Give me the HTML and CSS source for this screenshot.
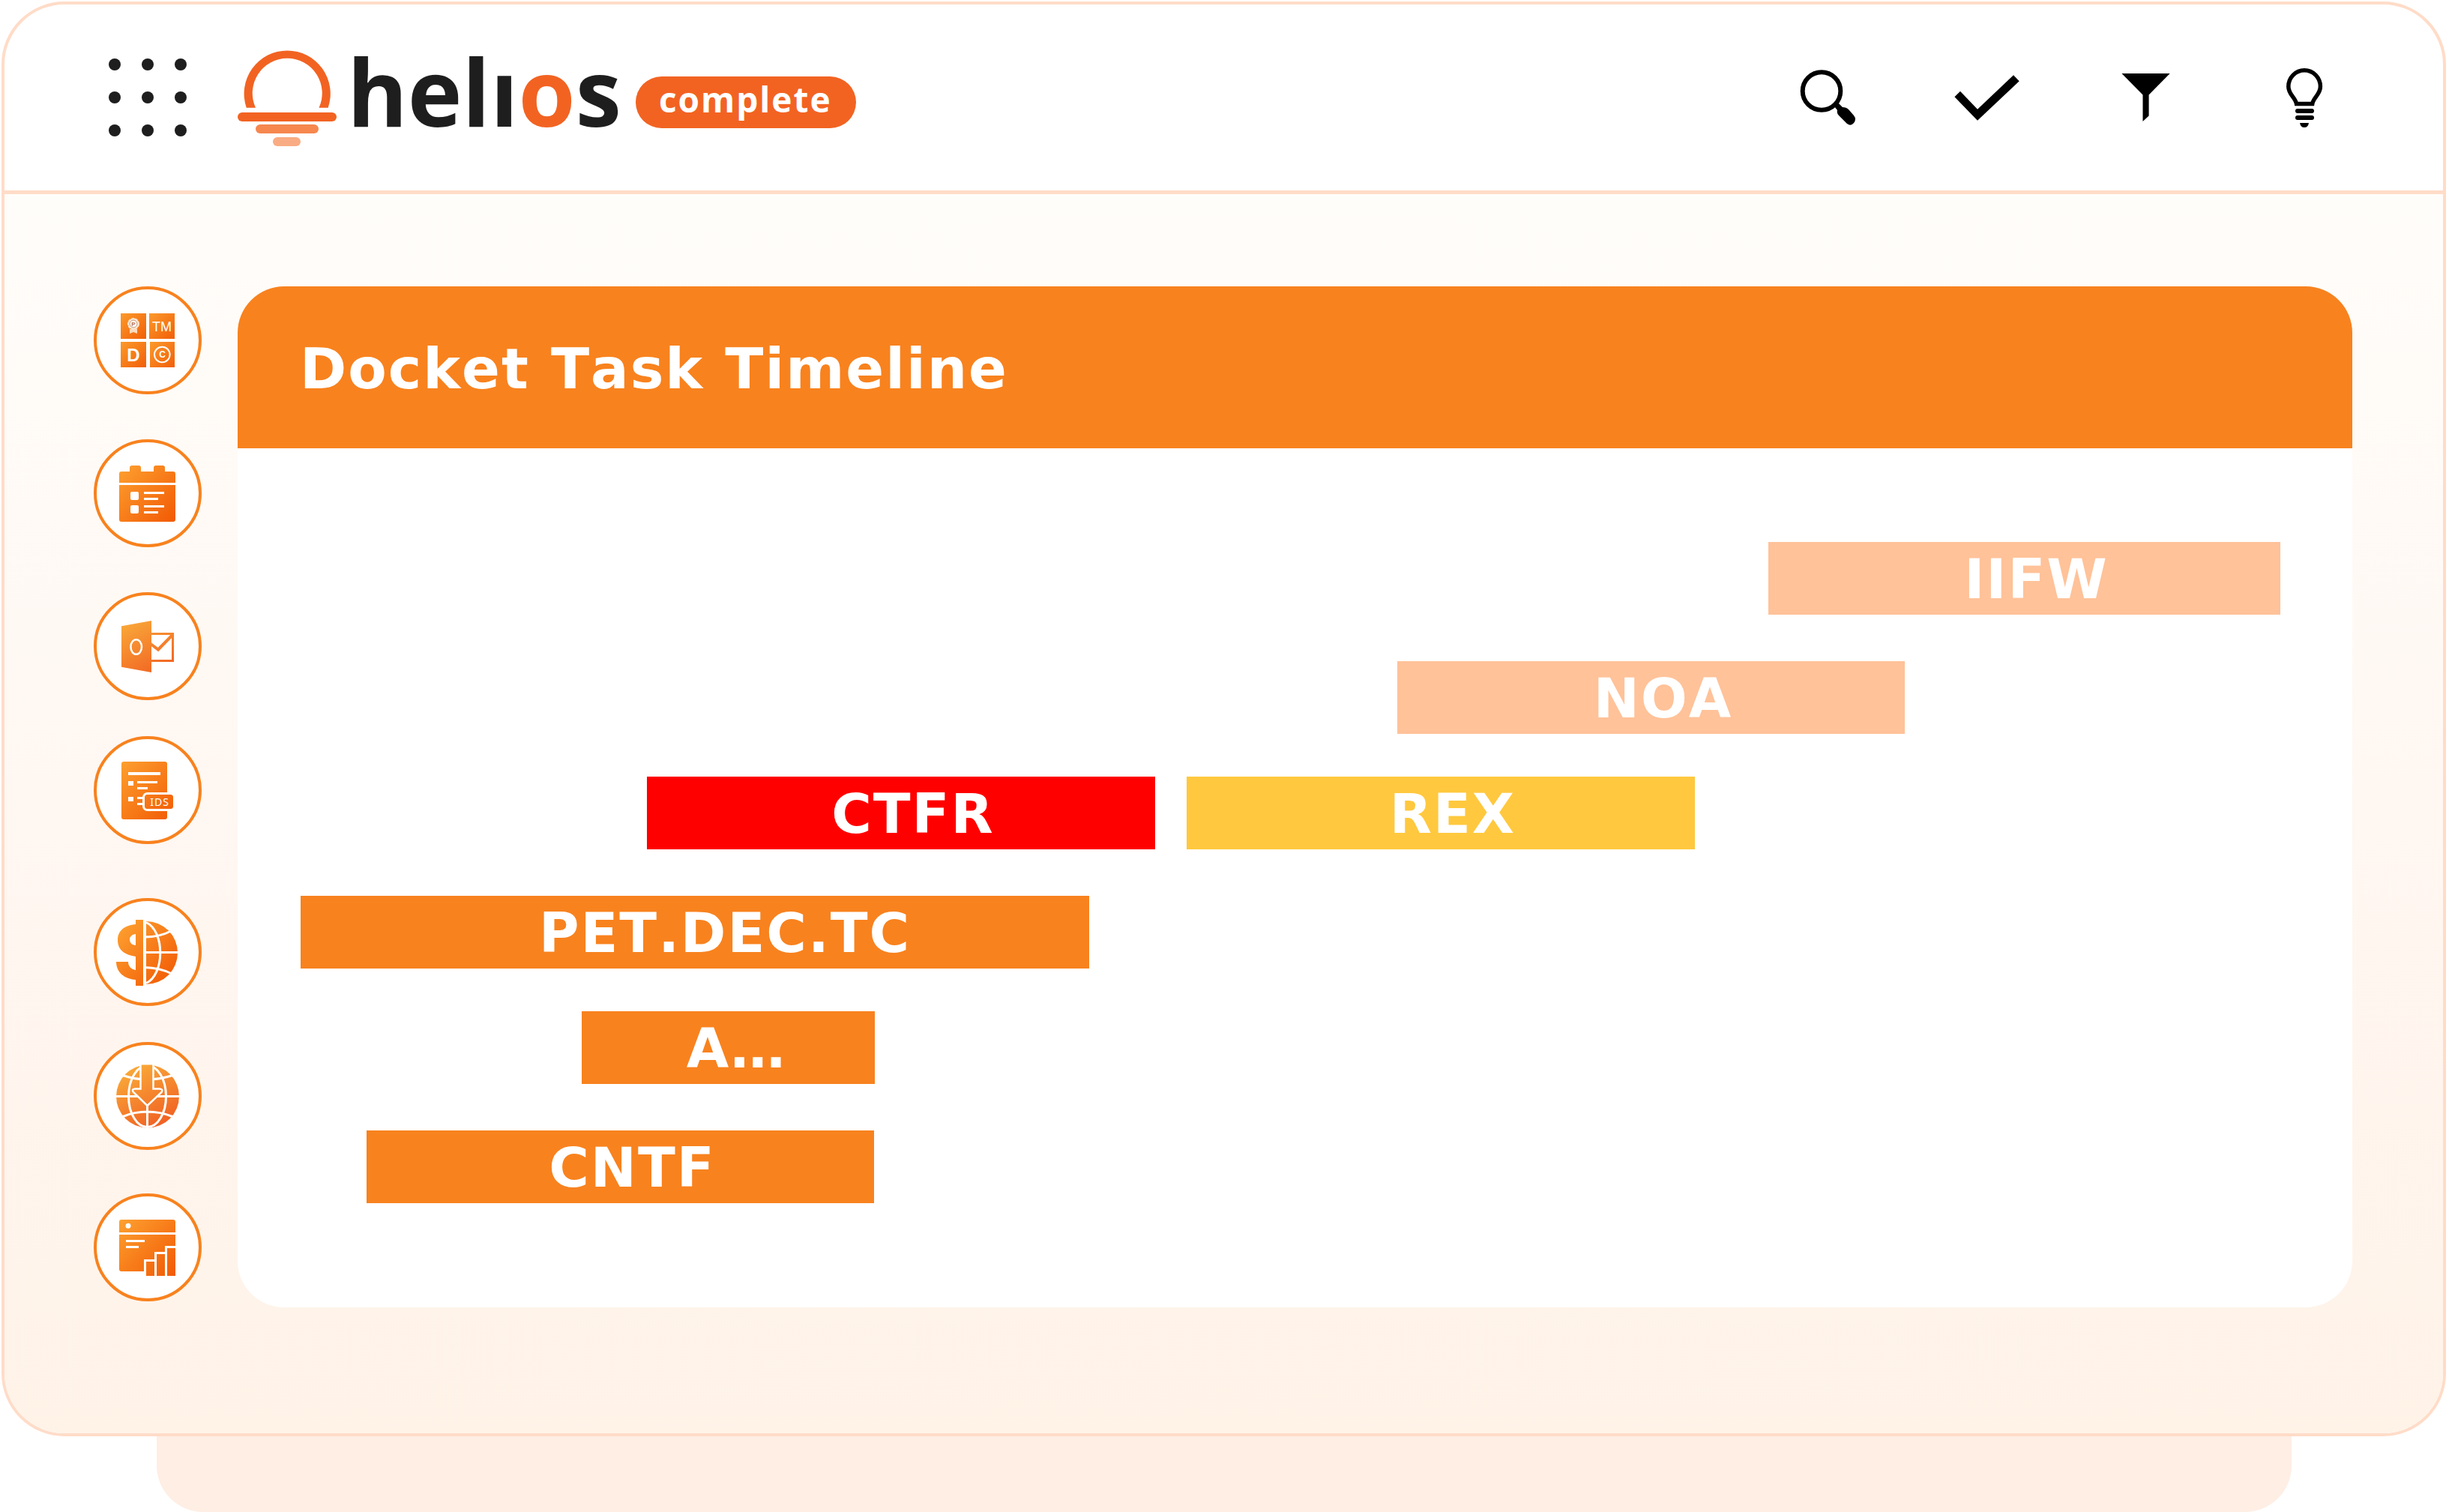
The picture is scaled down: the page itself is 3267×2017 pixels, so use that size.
FILE: index.html
```html
<!DOCTYPE html>
<html lang="en">
<head>
<meta charset="utf-8">
<title>helios complete – Docket Task Timeline</title>
<link rel="stylesheet" href="styles.css">
</head>
<body>
<div class="frame">
  <header class="topbar">
    <button class="icon-button menu" type="button" aria-label="Apps">
      <svg viewBox="0 0 106 106" width="106" height="106" fill="#1e1e1e">
        <circle cx="9" cy="9" r="8"/><circle cx="53" cy="9" r="8"/><circle cx="97" cy="9" r="8"/>
        <circle cx="9" cy="53" r="8"/><circle cx="53" cy="53" r="8"/><circle cx="97" cy="53" r="8"/>
        <circle cx="9" cy="97" r="8"/><circle cx="53" cy="97" r="8"/><circle cx="97" cy="97" r="8"/>
      </svg>
    </button>
    <a class="brand" href="#">
      <svg class="sun" viewBox="0 0 132 130" width="132" height="130">
        <path d="M11.700 78.700A57.600 57.600 0 1 1 120.700 78.700H108.500A46.500 46.500 0 1 0 24 78.700Z" fill="#f26322"/>
        <rect x="0" y="85" width="132" height="12" rx="6" fill="#f26322"/>
        <rect x="24" y="101" width="84" height="12" rx="6" fill="#f6874f"/>
        <rect x="47" y="118" width="37" height="12" rx="6" fill="#f9ac83"/>
      </svg>
      <span class="wordmark">helı<span class="accent">o</span>s</span>
      <span class="edition">complete</span>
    </a>
    <nav class="tools">
      <button class="icon-button" type="button" aria-label="Search">
        <svg viewBox="0 0 96 96" width="96" height="96">
          <circle cx="40" cy="39.500" r="25.300" fill="none" stroke="#000" stroke-width="6"/>
          <path d="M57 60l4-6 7 7q5 0 8 3l7 8q4 5 0 10t-9 1l-11-11q-3-3-2-7z"/>
        </svg>
      </button>
      <button class="icon-button" type="button" aria-label="Complete">
        <svg viewBox="0 0 96 96" width="96" height="96"><path d="M13 39.700L36 63.700L84 18.300L91.700 26.300L36 78.700L5.400 47.300Z"/></svg>
      </button>
      <button class="icon-button" type="button" aria-label="Filter">
        <svg viewBox="0 0 96 96" width="96" height="96"><path d="M16.400 16H80.700L52.600 44.500V72.500L44.500 80V44.500Z"/></svg>
      </button>
      <button class="icon-button" type="button" aria-label="Ideas">
        <svg viewBox="0 0 96 96" width="96" height="96">
          <path d="M37.500 56.500C36 48 26.800 44 26.800 33.500a21.300 21.700 0 0 1 42.600 0C69.400 44 60 48 58.700 56.500Z" fill="none" stroke="#000" stroke-width="5.500"/>
          <rect x="36" y="63" width="25" height="6" rx="3"/><rect x="36" y="72" width="25" height="6" rx="3"/>
          <path d="M42 82H54Q53 88 48 88T42 82Z"/>
        </svg>
      </button>
    </nav>
  </header>

  <div class="workspace">
    <nav class="rail">
      <button class="rail-button" type="button" aria-label="Intellectual property">
        <svg viewBox="0 0 136 136" width="136" height="136">
          <defs>
            <linearGradient id="tile" x1="0" y1="0" x2="1" y2="1"><stop offset="0" stop-color="#fb9a2c"/><stop offset="1" stop-color="#f25f07"/></linearGradient>
            <linearGradient id="warm" gradientUnits="userSpaceOnUse" x1="30" y1="32" x2="106" y2="104"><stop offset="0" stop-color="#fda030"/><stop offset="1" stop-color="#f25a04"/></linearGradient>
            <linearGradient id="amber" gradientUnits="userSpaceOnUse" x1="42" y1="30" x2="84" y2="108"><stop offset="0" stop-color="#f9ab3a"/><stop offset="1" stop-color="#f16122"/></linearGradient>
          </defs>
          <g fill="url(#tile)"><rect x="32" y="32" width="34" height="34"/><rect x="70" y="32" width="34" height="34"/><rect x="32" y="70" width="34" height="34"/><rect x="71" y="70" width="33" height="34"/></g>
          <path d="M44 53h10v6l-5-2-5 2z" fill="#fbdcc0"/>
          <circle cx="49" cy="46" r="7" fill="#fff" stroke="#fbe3cf" stroke-width="2" stroke-dasharray="4 1"/>
          <circle cx="49" cy="46" r="5" fill="#fff" stroke="#c98a58" stroke-width="1"/>
          <text x="49" y="49" class="glyph seal" font-size="8">P</text>
          <text x="87" y="56" class="glyph" font-size="18">TM</text>
          <text x="49" y="96" class="glyph" font-size="24" font-weight="700">D</text>
          <circle cx="87.300" cy="87" r="10.300" fill="none" stroke="#fff" stroke-width="2"/>
          <text x="87.500" y="91.300" class="glyph" font-size="12" font-weight="700">C</text>
        </svg>
      </button>
      <button class="rail-button" type="button" aria-label="Docket calendar">
        <svg viewBox="0 0 136 136" width="136" height="136">
          <path fill="url(#warm)" d="M30 54V42q0-3 3-3H44V34q0-3 3-3h9q3 0 3 3v5H76V34q0-3 3-3h9q3 0 3 3v5h11q3 0 3 3V54ZM30 57H105v46q0 3-3 3H33q-3 0-3-3Z"/>
          <g fill="#fff"><rect x="45" y="66" width="11" height="11" rx="2"/><rect x="45" y="84" width="11" height="11" rx="2"/><path d="M63 66h27v3H63zM63 74h19v3H63zM63 84h27v3H63zM63 92h19v3H63z"/></g>
        </svg>
      </button>
      <button class="rail-button" type="button" aria-label="Outlook mail">
        <svg viewBox="0 0 136 136" width="136" height="136">
          <path fill="url(#amber)" d="M33 41.300L73 34V103L33 95.700Z"/>
          <path fill="none" stroke="url(#amber)" stroke-width="3" d="M73 51.500H101.500V87.500H73"/>
          <path fill="none" stroke="url(#amber)" stroke-width="4" d="M72 65L82 72.500L101 53"/>
          <ellipse cx="52.700" cy="69" rx="7.300" ry="9.800" fill="none" stroke="#fff" stroke-width="2.500"/>
        </svg>
      </button>
      <button class="rail-button" type="button" aria-label="IDS forms">
        <svg viewBox="0 0 136 136" width="136" height="136">
          <rect x="33" y="30" width="61" height="77" rx="3" fill="url(#warm)"/>
          <path fill="#fff" d="M42 44h43v4H42zM42 56h7v6h-7zM42 77h7v6h-7zM54 56h27v3H54zM54 64h14v3H54zM54 77h9v3h-9zM54 85h9v3h-9z"/>
          <rect x="62.500" y="72.500" width="41" height="22" rx="5" fill="url(#warm)" stroke="#fff" stroke-width="3"/>
          <text x="84" y="89" class="glyph ids" font-size="14">IDS</text>
        </svg>
      </button>
      <button class="rail-button" type="button" aria-label="International costs">
        <svg viewBox="0 0 136 136" width="136" height="136">
          <path fill="url(#warm)" d="M52 25H62V113H52V105C37 104 26 95 26 81H42C42 87 46 91 52 92V74C37 72 28 65 28 52C28 39 38 32 52 31ZM52 44Q44 45 44 51.500T52 59Z" fill-rule="evenodd"/>
          <path fill="url(#warm)" d="M66 27A42 42 0 0 1 66 111Z"/>
          <path fill="none" stroke="#fff" stroke-width="3" d="M66 68.500H110M66 28.500C91 40 91 98 66 109.500M64 48Q84 48 99 40M64 88.500Q84 89 99 96.500"/>
        </svg>
      </button>
      <button class="rail-button" type="button" aria-label="Global downloads">
        <svg viewBox="0 0 136 136" width="136" height="136">
          <circle cx="68" cy="68.500" r="42" fill="url(#amber)"/>
          <g fill="none" stroke="#fff" stroke-width="3">
            <path d="M25 68.500H111M67.500 80V111M35 40.500Q50 46 67.500 46T101 40.500M35 95.500Q50 89 67.500 89T101 95.500"/>
            <ellipse cx="67.500" cy="68.500" rx="25" ry="41"/>
          </g>
          <path d="M58.500 26.500V58.500H51Q46 59 49 63L67.500 81L86.500 63Q89 59 84 58.500H75.500V26.500Z" fill="url(#amber)"/>
          <path d="M58.500 24V58.500H51Q46 59 49 63L67.500 81L86.500 63Q89 59 84 58.500H75.500V24" fill="none" stroke="#fff" stroke-width="2.500"/>
        </svg>
      </button>
      <button class="rail-button" type="button" aria-label="Reports">
        <svg viewBox="0 0 136 136" width="136" height="136">
          <path fill="url(#warm)" d="M30 48V34q0-3 3-3h69q3 0 3 3V48ZM30 51H105V66H91V74H77V84H63V100H33q-3 0-3-3ZM66 87H77V106H66ZM80 77H91V106H80ZM94 69H105V106H94Z"/>
          <circle cx="42" cy="39.300" r="3.500" fill="#fff"/><path fill="#fff" d="M39 58h25v3H39zM39 66h17v3H39z"/>
        </svg>
      </button>
    </nav>

    <main class="panel">
      <h1 class="panel-title">Docket Task Timeline</h1>
      <div class="timeline">
        <div class="track"><div class="bar pale" style="margin-left:74.140%;width:25.860%">IIFW</div></div>
        <div class="track"><div class="bar pale" style="margin-left:55.396%;width:25.634%">NOA</div></div>
        <div class="track">
          <div class="bar red" style="margin-left:17.493%;width:25.672%">CTFR</div>
          <div class="bar yellow" style="margin-left:1.590%;width:25.672%">REX</div>
        </div>
        <div class="track"><div class="bar long" style="margin-left:0;width:39.833%">PET.DEC.TC</div></div>
        <div class="track"><div class="bar short" style="margin-left:14.199%;width:14.805%">A…</div></div>
        <div class="track"><div class="bar" style="margin-left:3.332%;width:25.634%">CNTF</div></div>
      </div>
    </main>
  </div>
</div>
<div class="underlay"></div>
</body>
</html>
```
FILE: styles.css
```css
* { box-sizing: border-box; }

body {
  margin: 0;
  padding: 2px 4px 0 2px;
  background: #fff;
  font-family: "DejaVu Sans", sans-serif;
}

button {
  padding: 0;
  border: 0;
  background: none;
  cursor: pointer;
}

svg { display: block; }

.frame {
  border: 4px solid #ffdcc8;
  border-radius: 84px;
  overflow: hidden;
  background: #fff;
}

.topbar {
  display: flex;
  align-items: center;
  height: 253px;
  padding: 0 137px 0 138px;
  border-bottom: 5px solid #ffdcc8;
}

.brand {
  display: flex;
  align-items: center;
  margin-left: 67px;
  font-family: "Open Sans", "Noto Sans", sans-serif;
  font-weight: 700;
  color: #1e1e1e;
  text-decoration: none;
}

.wordmark {
  margin: 0 0 16px 14px;
  font-size: 123px;
  line-height: 160px;
}

.accent { color: #f26322; }

.edition {
  margin: 12px 0 0 19px;
  padding: 0 32px 9px 31px;
  border-radius: 35px;
  background: #f26322;
  color: #fff;
  font-size: 46px;
  line-height: 60px;
  letter-spacing: 2px;
}

.tools {
  display: flex;
  gap: 116px;
  margin-left: auto;
}

.workspace {
  display: flex;
  align-items: flex-start;
  gap: 48px;
  padding: 123px 121px 168px 119px;
  background: linear-gradient(#fffdfa, #fff6f0 60%, #fff3e8);
}

.rail {
  display: flex;
  flex-direction: column;
  gap: 48px;
}

.rail-button {
  width: 144px;
  height: 144px;
  border: 4px solid #f8821e;
  border-radius: 50%;
  background: #fff;
}

.rail-button:nth-child(2),
.rail-button:nth-child(3) { margin-top: 12px; }
.rail-button:nth-child(5) { margin-top: 24px; }
.rail-button:nth-child(7) { margin-top: 10px; }

.glyph {
  fill: #fff;
  font-family: "Liberation Sans", sans-serif;
  text-anchor: middle;
}

.seal {
  fill: #b8733f;
  font-weight: 700;
}

.ids {
  font-family: "Noto Sans", sans-serif;
  letter-spacing: 1px;
}

.panel {
  flex: 1;
  overflow: hidden;
  border-radius: 62px;
  background: #fff;
}

.panel-title {
  margin: 0;
  padding: 5px 83px 0;
  background: #f8821e;
  color: #fff;
  font-size: 75px;
  font-weight: 700;
  font-kerning: none;
  line-height: 211px;
  letter-spacing: 2px;
}

.timeline {
  display: flex;
  flex-direction: column;
  gap: 57px;
  padding: 125px 96px 139px 84px;
}

.track { display: flex; }
.track:nth-child(odd) { margin-bottom: 5px; }

.bar {
  padding: 3px 0 0 32px;
  background: #f8821e;
  color: #fff;
  font-size: 73px;
  font-weight: 700;
  font-kerning: none;
  line-height: 94px;
  letter-spacing: 2px;
  text-align: center;
  white-space: nowrap;
}

.bar.pale { background: #ffc299; }
.bar.red { background: #f00; }
.bar.yellow { background: #ffc83e; }
.bar.long { padding-left: 80px; }
.bar.short { padding-left: 22px; }

.underlay {
  height: 101px;
  margin: 0 206px 0 207px;
  border-radius: 0 0 62px 62px;
  background: #feeee4;
}
```
